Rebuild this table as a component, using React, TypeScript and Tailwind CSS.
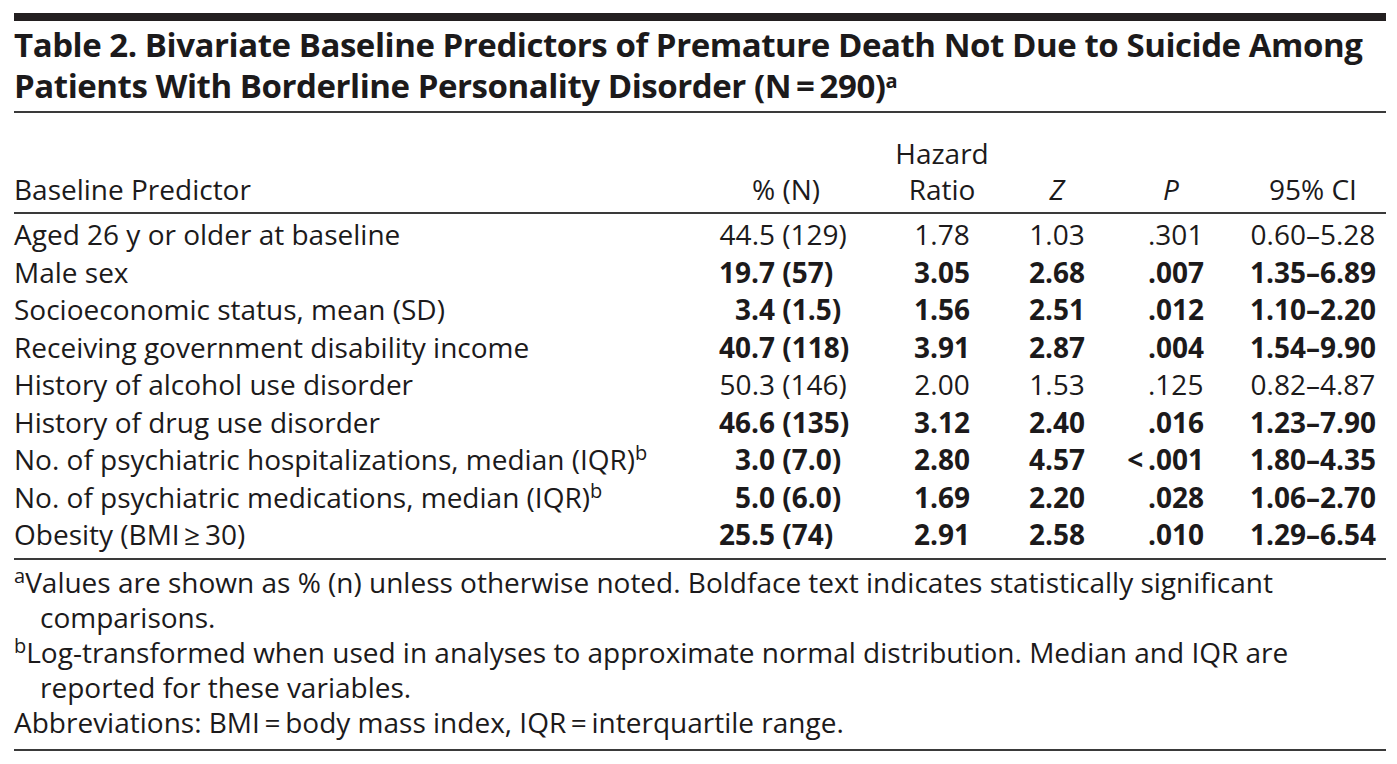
import React from "react";

type Row = {
  label: string;
  sup?: string;
  n1: string;
  n2: string;
  hr: string;
  z: string;
  pre: string;
  p: string;
  ci: string;
  bold: boolean;
};

const rows: Row[] = [
  { label: "Aged 26 y or older at baseline", n1: "44.5", n2: "(129)", hr: "1.78", z: "1.03", pre: "", p: ".301", ci: "0.60–5.28", bold: false },
  { label: "Male sex", n1: "19.7", n2: "(57)", hr: "3.05", z: "2.68", pre: "", p: ".007", ci: "1.35–6.89", bold: true },
  { label: "Socioeconomic status, mean (SD)", n1: "3.4", n2: "(1.5)", hr: "1.56", z: "2.51", pre: "", p: ".012", ci: "1.10–2.20", bold: true },
  { label: "Receiving government disability income", n1: "40.7", n2: "(118)", hr: "3.91", z: "2.87", pre: "", p: ".004", ci: "1.54–9.90", bold: true },
  { label: "History of alcohol use disorder", n1: "50.3", n2: "(146)", hr: "2.00", z: "1.53", pre: "", p: ".125", ci: "0.82–4.87", bold: false },
  { label: "History of drug use disorder", n1: "46.6", n2: "(135)", hr: "3.12", z: "2.40", pre: "", p: ".016", ci: "1.23–7.90", bold: true },
  { label: "No. of psychiatric hospitalizations, median (IQR)", sup: "b", n1: "3.0", n2: "(7.0)", hr: "2.80", z: "4.57", pre: "<\u2009", p: ".001", ci: "1.80–4.35", bold: true },
  { label: "No. of psychiatric medications, median (IQR)", sup: "b", n1: "5.0", n2: "(6.0)", hr: "1.69", z: "2.20", pre: "", p: ".028", ci: "1.06–2.70", bold: true },
  { label: "Obesity (BMI\u2009≥\u200930)", n1: "25.5", n2: "(74)", hr: "2.91", z: "2.58", pre: "", p: ".010", ci: "1.29–6.54", bold: true },
];

const GRID = "grid grid-cols-[676px_180px_144px_86px_140px_146px]";

function Rule() {
  return <div className="h-[2px] bg-[#3a3a3a]" />;
}

export default function App() {
  return (
    <div className="w-[1397px] h-[764px] bg-white text-[#1c1a1b] font-['Open_Sans',sans-serif] overflow-hidden">
      <div className="ml-[14px] w-[1372px] pt-[13px]">
        <div className="h-[8px] bg-[#231f20]" />
        <h1 className="pt-[3px] text-[33px] tracking-[-0.45px] font-bold leading-[41px] whitespace-nowrap mb-[5px]">
          Table 2. Bivariate Baseline Predictors of Premature Death Not Due to Suicide Among
          <br />
          Patients With Borderline Personality Disorder (N{"\u2009=\u2009"}290)
          <sup className="text-[20px] tracking-normal">a</sup>
        </h1>
        <Rule />

        {/* Header */}
        <div className={`${GRID} items-end pt-[22px] pb-[5px] text-[28px] leading-[36px] whitespace-nowrap`}>
          <div>Baseline Predictor</div>
          <div className="pl-[62px]">% (N)</div>
          <div className="text-center">
            Hazard
            <br />
            Ratio
          </div>
          <div className="text-center italic">Z</div>
          <div className="pl-[63px] italic">P</div>
          <div className="text-center">95% CI</div>
        </div>
        <Rule />

        {/* Body */}
        <div className="pt-[2px] pb-[4px] text-[28px] leading-[37.5px] whitespace-nowrap">
          {rows.map((r) => (
            <div key={r.label} className={GRID}>
              <div>
                {r.label}
                {r.sup && <sup className="text-[20px]">{r.sup}</sup>}
              </div>
              <div className={`flex ${r.bold ? "font-bold" : ""}`}>
                <span className="w-[85px] text-right">{r.n1}</span>
                <span>&nbsp;{r.n2}</span>
              </div>
              <div className={`text-center ${r.bold ? "font-bold" : ""}`}>{r.hr}</div>
              <div className={`text-center ${r.bold ? "font-bold" : ""}`}>{r.z}</div>
              <div className={`flex ${r.bold ? "font-bold" : ""}`}>
                <span className="w-[48px] text-right">{r.pre}</span>
                <span>{r.p}</span>
              </div>
              <div className={`text-center ${r.bold ? "font-bold" : ""}`}>{r.ci}</div>
            </div>
          ))}
        </div>
        <Rule />

        {/* Footnotes */}
        <div className="pt-[5px] text-[28px] leading-[35px] whitespace-nowrap mb-[9px]">
          <p className="pl-[26px] indent-[-26px]">
            <sup className="text-[20px]">a</sup>Values are shown as % (n) unless otherwise noted. Boldface text indicates statistically significant
            <br />
            comparisons.
          </p>
          <p className="pl-[26px] indent-[-26px]">
            <sup className="text-[20px]">b</sup>Log-transformed when used in analyses to approximate normal distribution. Median and IQR are
            <br />
            reported for these variables.
          </p>
          <p>
            Abbreviations: BMI{"\u2009=\u2009"}body mass index, IQR{"\u2009=\u2009"}interquartile range.
          </p>
        </div>
        <Rule />
      </div>
    </div>
  );
}
